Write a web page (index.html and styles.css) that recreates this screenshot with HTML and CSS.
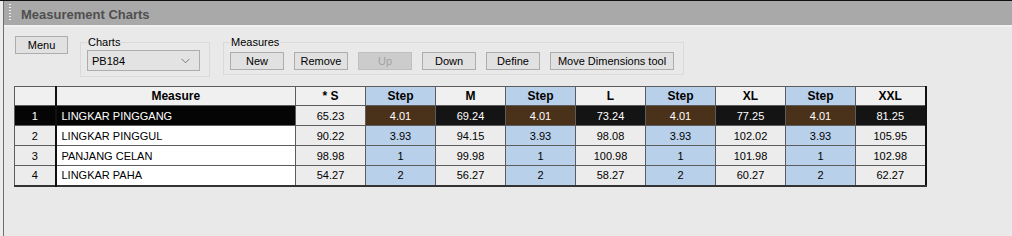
FILE: index.html
```html
<!DOCTYPE html>
<html>
<head>
<meta charset="utf-8">
<link rel="stylesheet" href="styles.css">
</head>
<body>
<div class="page">
  <div class="window">
    <div class="titlebar">
      <span class="grip"></span>
      <span class="title">Measurement Charts</span>
    </div>
    <div class="toolbar">
      <div class="btn menu">Menu</div>
      <fieldset class="group charts">
        <legend>Charts</legend>
        <div class="combo">
          <span>PB184</span>
          <svg width="9" height="6" viewBox="0 0 9 6"><path d="M0.5 0.8 L4.5 4.8 L8.5 0.8" fill="none" stroke="#7a7a7a" stroke-width="1"/></svg>
        </div>
      </fieldset>
      <fieldset class="group measures">
        <legend>Measures</legend>
        <div class="btnrow">
          <div class="btn">New</div>
          <div class="btn">Remove</div>
          <div class="btn disabled">Up</div>
          <div class="btn">Down</div>
          <div class="btn">Define</div>
          <div class="btn wide">Move Dimensions tool</div>
        </div>
      </fieldset>
    </div>
    <table class="grid">
      <colgroup>
        <col class="c-num"><col class="c-name">
        <col class="c-val"><col class="c-val"><col class="c-val"><col class="c-val"><col class="c-val">
        <col class="c-val"><col class="c-val"><col class="c-val"><col class="c-val">
      </colgroup>
      <thead>
        <tr>
          <th class="num"></th><th class="name-h">Measure</th>
          <th>* S</th><th class="step">Step</th><th>M</th><th class="step">Step</th><th>L</th>
          <th class="step">Step</th><th>XL</th><th class="step">Step</th><th>XXL</th>
        </tr>
      </thead>
      <tbody>
        <tr class="sel">
          <td class="num">1</td><td class="name">LINGKAR PINGGANG</td>
          <td class="base">65.23</td><td class="step">4.01</td><td class="size">69.24</td><td class="step">4.01</td><td class="size">73.24</td>
          <td class="step">4.01</td><td class="size">77.25</td><td class="step">4.01</td><td class="size">81.25</td>
        </tr>
        <tr>
          <td class="num">2</td><td class="name">LINGKAR PINGGUL</td>
          <td>90.22</td><td class="step">3.93</td><td>94.15</td><td class="step">3.93</td><td>98.08</td>
          <td class="step">3.93</td><td>102.02</td><td class="step">3.93</td><td>105.95</td>
        </tr>
        <tr>
          <td class="num">3</td><td class="name">PANJANG CELAN</td>
          <td>98.98</td><td class="step">1</td><td>99.98</td><td class="step">1</td><td>100.98</td>
          <td class="step">1</td><td>101.98</td><td class="step">1</td><td>102.98</td>
        </tr>
        <tr>
          <td class="num">4</td><td class="name">LINGKAR PAHA</td>
          <td>54.27</td><td class="step">2</td><td>56.27</td><td class="step">2</td><td>58.27</td>
          <td class="step">2</td><td>60.27</td><td class="step">2</td><td>62.27</td>
        </tr>
      </tbody>
    </table>
  </div>
</div>
</body>
</html>
```
FILE: styles.css
```css
* { box-sizing: border-box; }
html, body { margin: 0; padding: 0; }
body {
  width: 1012px;
  height: 236px;
  overflow: hidden;
  font-family: "Liberation Sans", Arial, sans-serif;
  font-size: 11px;
  color: #000;
  background: #e6e6e6;
}
.page {
  display: flex;
  height: 236px;
  padding-left: 3px;
  border-top: 1px solid #111;
  background: #ececec;
}
.window {
  flex: 1;
  border-left: 1px solid #6e6e6e;
  background: #e9e9e9;
}
.titlebar {
  height: 26px;
  background: #a9a9a9;
  display: flex;
  align-items: center;
  padding: 2px 0 0 5px;
  border-bottom: 2px solid #f1f1f1;
}
.grip {
  width: 2px;
  height: 18px;
  margin-top: -2px;
  background: repeating-linear-gradient(to bottom, #f4f4f4 0 1px, transparent 1px 3px);
}
.title {
  margin-left: 10px;
  font-size: 13px;
  font-weight: bold;
  color: #4f4f4f;
}
.toolbar {
  display: flex;
  align-items: flex-start;
  padding: 9px 0 0 11px;
  gap: 12px;
}
.btn {
  height: 18px;
  width: 54px;
  background: #e1e1e1;
  border: 1px solid #adadad;
  display: flex;
  align-items: center;
  justify-content: center;
  font-size: 11px;
  color: #000;
}
.btn.menu { width: 53px; height: 18px; }
.btn.disabled {
  background: #cccccc;
  border-color: #bfbfbf;
  color: #a2a2a2;
}
.btn.wide { width: 124px; }
.group {
  margin: -1px 0 0 0;
  border: 1px solid #dadada;
  padding: 0 9px 5px 6px;
  min-width: 0;
}
.group legend {
  padding: 0 1px;
  font-size: 11px;
  line-height: 14px;
  color: #000;
}
.charts { width: 130px; }
.measures { margin-left: 1px; padding-bottom: 4px; }
.combo {
  margin-top: 1px;
  width: 113px;
  height: 21px;
  background: #e3e3e3;
  border: 1px solid #adadad;
  display: flex;
  align-items: center;
  justify-content: space-between;
  padding: 0 9px 0 4px;
  font-size: 11px;
}
.btnrow {
  display: flex;
  gap: 10px;
  margin-top: 3px;
}
.grid {
  margin: 9px 0 0 10px;
  border-collapse: collapse;
  table-layout: fixed;
  width: 912px;
  border-top: 1px solid #555;
  border-left: 1px solid #555;
  border-right: 2px solid #111;
  border-bottom: 2px solid #333;
}
.c-num { width: 41px; }
.c-name { width: 240px; }
.c-val { width: 70px; }
.grid th, .grid td {
  border: 1px solid #5c5c5c;
  padding: 0;
  text-align: center;
  white-space: nowrap;
  overflow: hidden;
}
.grid th {
  height: 19px;
  background: #f0f0f0;
  font-size: 12px;
  font-weight: bold;
}
.grid td {
  height: 20px;
  background: #ececec;
  font-size: 11px;
}
.grid th.num, .grid td.num { border-right: 2px solid #111; }
.grid td.name {
  background: #fff;
  text-align: left;
  padding-left: 5px;
}
.grid .step { background: #b8d0ea; }
.grid tr.sel td { color: #fff; background: #141414; }
.grid tr.sel td.num, .grid tr.sel td.name { background: #050505; }
.grid tr.sel td.step { background: #4a3119; }
.grid tr.sel td.base { background: #ececec; color: #000; }
```
